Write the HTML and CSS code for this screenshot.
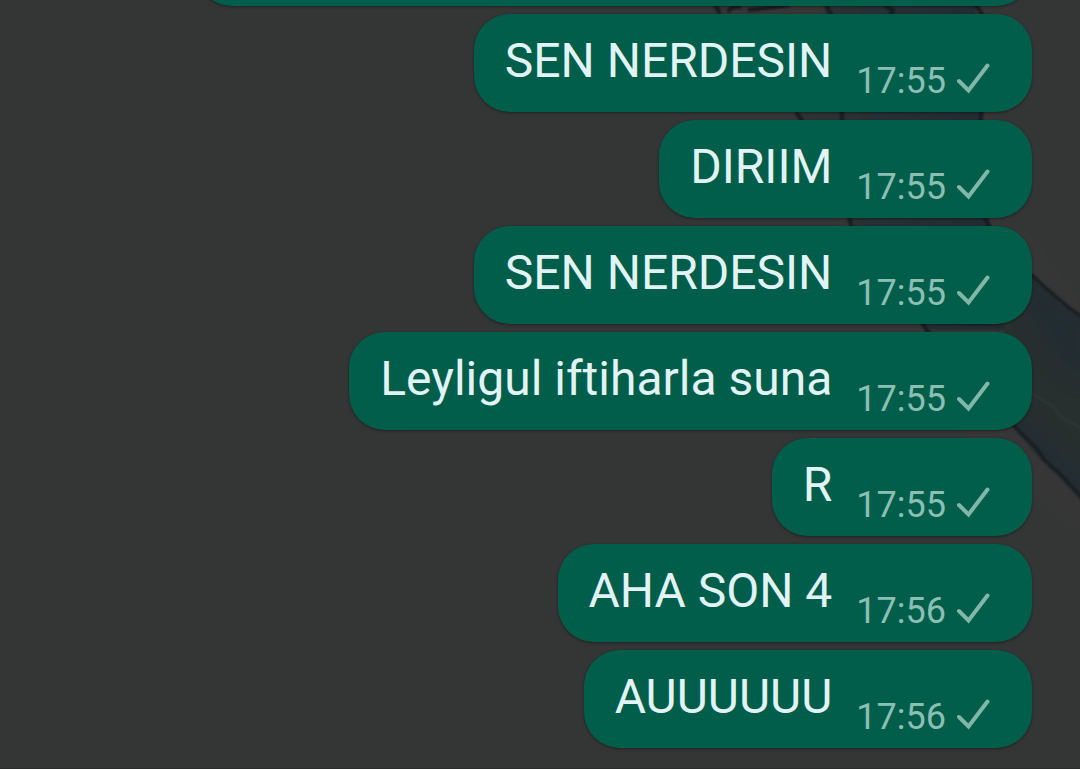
FILE: index.html
```html
<!DOCTYPE html>
<html lang="tr">
<head>
<meta charset="utf-8">
<meta name="viewport" content="width=device-width, initial-scale=1">
<title>Sohbet</title>
<link rel="stylesheet" href="styles.css">
</head>
<body>
<svg class="wallpaper" width="400" height="769" viewBox="680 0 400 769" aria-hidden="true">
  <defs>
    <filter id="soft" x="-10%" y="-10%" width="120%" height="120%" color-interpolation-filters="sRGB"><feGaussianBlur stdDeviation="0.8"/></filter>
    <filter id="wash" x="-50%" y="-50%" width="200%" height="200%" color-interpolation-filters="sRGB"><feGaussianBlur stdDeviation="9"/></filter>
    <linearGradient id="leg" x1="0" x2="1" y1="0" y2="0">
      <stop offset="0" stop-color="#303333"/><stop offset=".4" stop-color="#263036"/><stop offset="1" stop-color="#202b31"/>
    </linearGradient>
    <linearGradient id="warm" x1="0" x2="1" y1="0" y2="0">
      <stop offset="0" stop-color="#383636" stop-opacity="0"/><stop offset=".3" stop-color="#383636"/><stop offset="1" stop-color="#383636"/>
    </linearGradient>
    <clipPath id="limb"><path d="M1000 240 1035 278 1060 303 1090 325V510L1062 480 1040 458 1010 424Z"/></clipPath>
  </defs>
  <path fill="url(#warm)" d="M700 0H985L1000 225 1031 235 1090 320V540L900 380 790 110 710 8Z" opacity=".7"/>
  <g filter="url(#soft)">
    <path fill="url(#leg)" d="M828 0H975L983 115 990 230 1010 330H925L848 218 795 110Z"/>
    <path fill="none" stroke="#171c1e" stroke-width="4" d="M714 2 720 14M728 12 732 7H741M748 10 790 5M823 0 832 16M884 5 893 10 890 16M973 0 983 16M796 112 803 122M842 110V122M982 110 980 122M849 216 852 230M984 216 991 230M920 320 930 335"/>
    <path fill="#282f2f" d="M1000 240 1035 278 1060 303 1090 325V510L1062 480 1040 458 1010 424Z"/>
    <g clip-path="url(#limb)">
      <path filter="url(#wash)" stroke="#222d33" stroke-width="27" fill="none" d="M1030 280 1060 340 1090 370M1007 420 1090 505M1070 310 1090 330"/>
      <path stroke="#3d4241" stroke-width="1" fill="none" d="M1032 394 1054 407 1062 418 1090 433"/>
    </g>
    <path fill="none" stroke="#171c1e" stroke-width="3" d="M1031 274 1047 289 1068 307 1090 322M1012 424 1037 449 1045 461 1059 473 1090 506"/>
  </g>
</svg>
<main class="chat">
  <div class="bubble bubble-cut"></div>
  <article class="bubble"><p class="text">SEN NERDESIN</p><time class="time">17:55</time><svg class="check" viewBox="0 0 34 31" role="img" aria-label="Gönderildi"><path d="M3 18 12.500 27.500 31.500 2.500"/></svg></article>
  <article class="bubble"><p class="text">DIRIIM</p><time class="time">17:55</time><svg class="check" viewBox="0 0 34 31" role="img" aria-label="Gönderildi"><path d="M3 18 12.500 27.500 31.500 2.500"/></svg></article>
  <article class="bubble"><p class="text">SEN NERDESIN</p><time class="time">17:55</time><svg class="check" viewBox="0 0 34 31" role="img" aria-label="Gönderildi"><path d="M3 18 12.500 27.500 31.500 2.500"/></svg></article>
  <article class="bubble"><p class="text">Leyligul iftiharla suna</p><time class="time">17:55</time><svg class="check" viewBox="0 0 34 31" role="img" aria-label="Gönderildi"><path d="M3 18 12.500 27.500 31.500 2.500"/></svg></article>
  <article class="bubble"><p class="text">R</p><time class="time">17:55</time><svg class="check" viewBox="0 0 34 31" role="img" aria-label="Gönderildi"><path d="M3 18 12.500 27.500 31.500 2.500"/></svg></article>
  <article class="bubble"><p class="text">AHA SON 4</p><time class="time">17:56</time><svg class="check" viewBox="0 0 34 31" role="img" aria-label="Gönderildi"><path d="M3 18 12.500 27.500 31.500 2.500"/></svg></article>
  <article class="bubble"><p class="text">AUUUUUU</p><time class="time">17:56</time><svg class="check" viewBox="0 0 34 31" role="img" aria-label="Gönderildi"><path d="M3 18 12.500 27.500 31.500 2.500"/></svg></article>
</main>
</body>
</html>
```
FILE: styles.css
```css
* {
  box-sizing: border-box;
}

body {
  margin: 0;
  background: #343635;
  font-family: Roboto, "Noto Sans", sans-serif;
}

.wallpaper {
  position: absolute;
  top: 0;
  right: 0;
}

.chat {
  position: relative;
  display: flex;
  flex-direction: column;
  justify-content: flex-end;
  align-items: flex-end;
  gap: 8px;
  height: 100vh;
  padding: 0 48px 20px 0;
  overflow: hidden;
  border-bottom: 1px solid #2b2d2c;
}

.bubble {
  display: flex;
  flex-shrink: 0;
  align-items: flex-end;
  padding: 19px 42px 10px 31px;
  border-radius: 36px;
  background: #005e4b;
  box-shadow: 0 1px 3px rgba(0, 0, 0, 0.4);
}

.bubble-cut {
  width: 81%;
  height: 98px;
}

.text {
  margin: 0 24px 13px 0;
  color: #e2f3f5;
  font-size: 48px;
  line-height: 56px;
}

.time {
  color: #8cbfb4;
  font-size: 36px;
  line-height: 42px;
}

.check {
  width: 34px;
  height: 31px;
  margin: 0 0 8px 10px;
  fill: none;
  stroke: #80b7aa;
  stroke-width: 4;
  stroke-linecap: round;
}
```
